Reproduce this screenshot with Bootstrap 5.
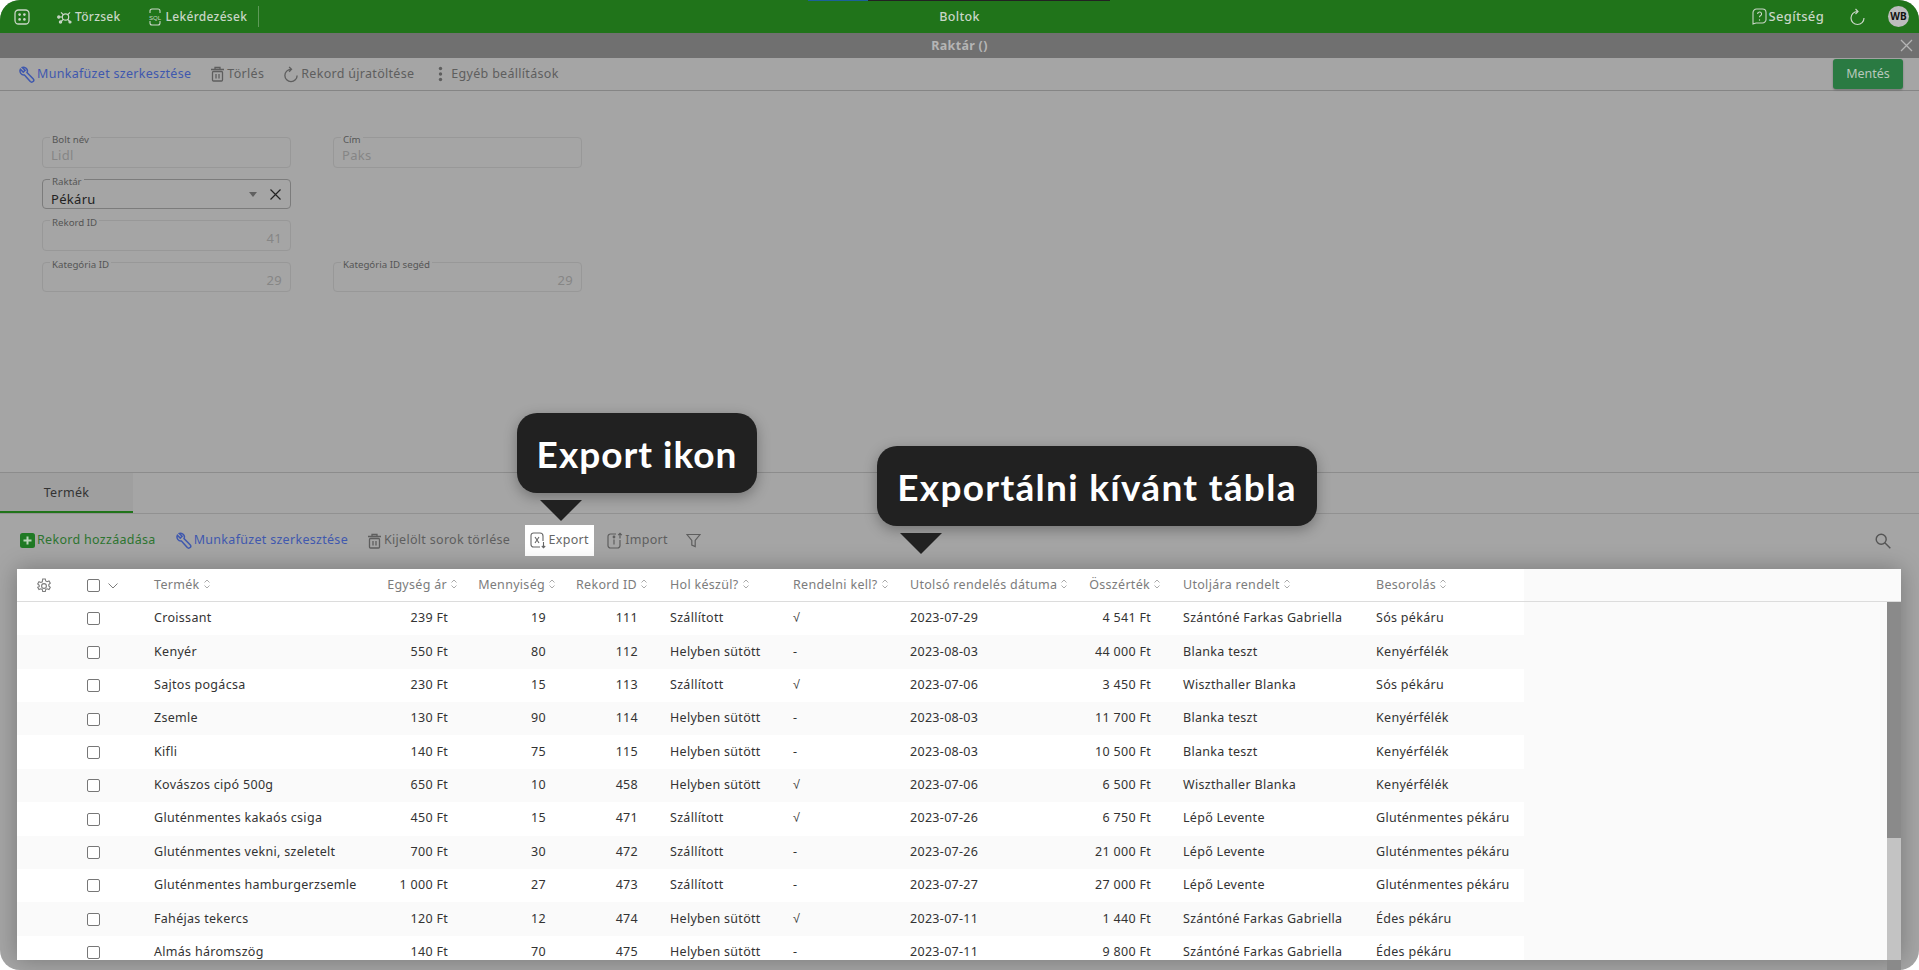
<!DOCTYPE html>
<html lang="hu">
<head>
<meta charset="utf-8">
<title>Boltok</title>
<link rel="stylesheet" href="https://cdn.jsdelivr.net/npm/bootstrap@5.3.0/dist/css/bootstrap.min.css">
<style>
html,body{height:970px;overflow:hidden;background:#fff}
body{font-family:"Noto Sans","Liberation Sans",sans-serif;font-size:12.5px;letter-spacing:.3px;color:#333}
.frame{position:relative;height:970px;background:#a5a5a5;border-radius:20px;overflow:hidden}
.topbar{position:relative;height:33px;background:#20741a;color:#c9d6c7;font-weight:500;font-size:12px;padding-left:14px}
.topline{position:absolute;left:808px;top:0;width:302px;height:1px;background:#222}
.topline::before{content:"";position:absolute;left:0;top:0;width:60px;height:1px;background:#1c6199}
.toptitle{position:absolute;left:0;right:0;top:0;line-height:33px;text-align:center;font-size:12.5px}
.top-item{display:flex;align-items:center;gap:2px;margin-left:27px}
.top-item-sql{gap:4px}
.top-divider{width:1px;height:21px;background:#5e9a58;margin-left:11px}
.top-help{display:flex;align-items:center;gap:2px;margin-left:auto;font-size:13px}
.top-reload{margin-left:25px}
.avatar-wb{width:21px;height:21px;margin-left:22px;margin-right:10px;background:#bdbdbd;color:#111;font-size:10px;font-weight:700;letter-spacing:0}
.titlebar{position:relative;height:25px;background:#707070;color:#b5b5b5;font-weight:700;text-align:center;line-height:25px;font-size:12.5px}
.titleclose{position:absolute;right:6px;top:6px;width:13px;height:13px;display:block}
.toolbar{height:33px;border-bottom:1px solid #858585;padding:0 16px 0 19px}
.tool{display:flex;align-items:center;gap:2px;color:#5e5e5e}
.tool svg{flex:none}
.tool-blue{color:#3f58ae}
.tool-green{color:#2d7430}
.ml-trash{margin-left:19px}
.ml-reload{margin-left:19px}
.ml-more{margin-left:24px;gap:8px}
.ml-import{margin-left:13px}
.ml-filter{margin-left:18px}
.save-btn{background:#2a7a42;color:#b8c8bc;border-radius:3px;font-size:12.5px;width:70px;height:30px;box-shadow:0 1px 2px rgba(0,0,0,.3);padding:1px 0 0}
.form-zone{height:381px;padding:46px 0 0 42px}
.fs-row{display:flex;gap:42px;margin-bottom:11px}
.fs{position:relative;width:249px;height:30.5px;border:1px solid #989898;border-radius:4px;padding:8px 8px 0;font-size:13px;color:#868686;line-height:18px}
.fs-tall{border-color:#7c7c7c;color:#222;padding-top:10px}
.fs-num{text-align:right}
.fs-label{position:absolute;left:7px;top:-4px;padding:0 2px;background:#a5a5a5;font-size:9.7px;letter-spacing:0;line-height:12px;color:#555}
.fs-caret{position:absolute;right:33px;top:12px;width:0;height:0;border:4px solid transparent;border-top:5px solid #606060;border-bottom:0}
.fs-x{position:absolute;right:9px;top:9px}
.tabs{height:42px;border-top:1px solid #8c8c8c;border-bottom:1px solid #919191}
.tab-item{width:133px;height:40px;line-height:40px;text-align:center;background:#9f9f9f;border-bottom:2px solid #20741a;color:#333}
.subbar{height:55px;padding:0 28px 2px 20px}
.subbar .gap-a{margin-left:20px}
.export-hi{background:#fff;color:#666;height:31px;width:69px;justify-content:center;margin-left:15px}
.panel{position:relative;margin-left:17px;width:1884px;height:391px;background:#fafafa;box-shadow:0 0 22px rgba(0,0,0,.28);overflow:hidden}
.gridtable{table-layout:fixed;width:1507px;border-collapse:collapse;margin:0}
.gridtable th{height:33px;font-weight:400;color:#7c7c7c;background:#fff;padding:0 14px;white-space:nowrap}
.gridtable td{height:33.36px;padding:0 14px;white-space:nowrap;color:#333;background:#fff}
.gridtable tbody tr:nth-child(even) td{background:#fafafa}
.gridtable td.num{text-align:right;padding-right:18px}
.gridtable th.num{text-align:right;padding-right:8px;padding-left:0}
.headrule{position:absolute;left:0;right:0;top:32px;height:1px;background:#dcdcdc}
.w-a{width:58px}.w-b{width:65px}.w-c{width:242px}.w-d{width:84px}.w-e{width:98px}.w-f{width:92px}.w-g{width:123px}.w-h{width:117px}.w-i{width:179px}.w-j{width:94px}.w-k{width:193px}.w-l{width:162px}
.boxy{display:inline-block;width:13px;height:13px;border:1px solid #777;border-radius:2px;background:#fff;vertical-align:middle}
.gridtable .center-cell{padding:0 0 0 12px}
.gear{margin-left:7px}
.sorter{display:inline-block;width:8px;height:12px;vertical-align:-1px;margin-left:3px}
.mark-ok{color:#555}
.sbar{position:absolute;right:0;top:33px;bottom:0;width:14px;background:#c3c3c3}
.sthumb{height:236px;background:#8a8a8a}
.stub{position:absolute;right:18px;bottom:0;width:14px;height:10px;background:#8a8a8a}
.callout{position:absolute;background:#212121;color:#fff;border-radius:20px;height:80px;line-height:82px;text-align:center;font-family:Lato,"Liberation Sans",sans-serif;font-weight:700;font-size:37px;letter-spacing:1px;box-shadow:0 4px 14px rgba(0,0,0,.3)}
.callout-a{left:517px;top:413px;width:240px}
.callout-b{left:877px;top:446px;width:440px;letter-spacing:1.3px}
.pointer{position:absolute;width:0;height:0;border-style:solid;border-color:#212121 transparent transparent;border-width:21px 21px 0}
.pointer-a{left:540px;top:500px}
.pointer-b{left:900px;top:533px}
</style>
</head>
<body>
<svg width="0" height="0" class="position-absolute">
  <defs>
    <symbol id="sort-ic" viewBox="0 0 8 12"><path d="M1.500 4.500 4 2l2.500 2.500M1.500 7.500 4 10l2.500-2.500" fill="none" stroke="#aaa"/></symbol>
    <symbol id="wrench-ic" viewBox="0 0 17 17"><path d="M1.500 3 4.500 6 6.500 4 3.500 1A4 4 0 0 1 8.500 6.500L15 13A2 2 0 0 1 12 16L5.800 9A4.200 4.200 0 0 1 1.500 3Z" fill="none" stroke="#3f58ae" stroke-width="1.600"/></symbol>
    <symbol id="trash-ic" viewBox="0 0 15 16"><path d="M1 3.500h13M5 3.500V1.500h5v2" fill="none" stroke="#5e5e5e" stroke-width="1.300"/><rect x="2.500" y="5.500" width="10" height="9.500" rx="1" fill="none" stroke="#5e5e5e" stroke-width="1.300"/><path d="M6 8v4.500M9 8v4.500" fill="none" stroke="#5e5e5e" stroke-width="1.300"/></symbol>
  </defs>
</svg>
<div class="frame">
  <div class="topbar d-flex align-items-center">
    <span class="topline"></span>
    <span class="toptitle">Boltok</span>
    <svg class="flex-shrink-0" width="16" height="16" viewBox="0 0 16 16" fill="none" stroke="#c9d6c7" stroke-width="1.300"><rect x="1" y="1" width="14" height="14" rx="3.500"/><g fill="#c9d6c7" stroke="none"><circle cx="5.600" cy="5.600" r="1.300"/><circle cx="10.400" cy="5.600" r="1.300"/><circle cx="5.600" cy="10.400" r="1.300"/><circle cx="10.400" cy="10.400" r="1.300"/></g></svg>
    <span class="top-item">
      <svg width="16" height="16" viewBox="0 0 16 16" fill="none" stroke="#c9d6c7" stroke-width="1.200"><circle cx="8.500" cy="8" r="3.200"/><path d="M6.200 5.700 4 3.400M10.800 5.700l2.300-2.300M6.200 10.300l-2 2.200M10.800 10.300l1.800 2.200M5.300 8H2.500"/><circle cx="1.800" cy="8" r="1.100" fill="#c9d6c7"/><circle cx="3.500" cy="13" r="1.100" fill="#c9d6c7"/><circle cx="13" cy="13" r="1" fill="#c9d6c7"/></svg>
      <span>Törzsek</span>
    </span>
    <span class="top-item top-item-sql">
      <svg width="14" height="18" viewBox="0 0 14 18" fill="none" stroke="#c9d6c7" stroke-width="1.100"><path d="M2 5V3a2 2 0 0 1 2-2h6a2 2 0 0 1 2 2v2M2 13v2a2 2 0 0 0 2 2h6a2 2 0 0 0 2-2v-2"/><text x="7" y="11.500" font-size="6" fill="#c9d6c7" stroke="none" text-anchor="middle" font-family="Liberation Sans" letter-spacing="0">SQL</text></svg>
      <span>Lekérdezések</span>
    </span>
    <span class="top-divider"></span>
    <span class="top-help">
      <svg width="15" height="17" viewBox="0 0 15 17" fill="none" stroke="#c9d6c7" stroke-width="1.100"><path d="M4.500 1h6a3.500 3.500 0 0 1 3.500 3.500v7A3.500 3.500 0 0 1 10.500 15H4L1 16V4.500A3.500 3.500 0 0 1 4.500 1z"/><path d="M5.600 6a2 2 0 1 1 2.800 1.800c-.6.3-.9.7-.9 1.500"/><circle cx="7.500" cy="12" r=".7" fill="#c9d6c7" stroke="none"/></svg>
      Segítség
    </span>
    <svg class="top-reload" width="17" height="18" viewBox="0 0 17 18" fill="none" stroke="#c9d6c7" stroke-width="1.200"><path d="M8.500 3.500A6.500 6.500 0 1 0 15 10"/><path d="M6.500 1 9 3.500 6.500 6"/></svg>
    <span class="avatar-wb d-flex align-items-center justify-content-center rounded-circle">WB</span>
  </div>

  <div class="titlebar">Raktár ()
    <svg class="titleclose" viewBox="0 0 13 13" stroke="#b5b5b5" stroke-width="1.300"><path d="M1 1l11 11M12 1 1 12"/></svg>
  </div>

  <div class="toolbar d-flex align-items-center">
    <span class="tool tool-blue"><svg width="16" height="17"><use href="#wrench-ic"/></svg>Munkafüzet szerkesztése</span>
    <span class="tool ml-trash"><svg width="15" height="16"><use href="#trash-ic"/></svg>Törlés</span>
    <span class="tool ml-reload">
      <svg width="16" height="17" viewBox="0 0 17 18" fill="none" stroke="#5e5e5e" stroke-width="1.400"><path d="M8.500 3.500A6.500 6.500 0 1 0 15 10"/><path d="M6.500 1 9 3.500 6.500 6"/></svg>
      Rekord újratöltése</span>
    <span class="tool ml-more">
      <svg width="5" height="16" viewBox="0 0 5 16" fill="#5e5e5e"><circle cx="2.500" cy="2.500" r="1.700"/><circle cx="2.500" cy="8" r="1.700"/><circle cx="2.500" cy="13.500" r="1.700"/></svg>
      Egyéb beállítások</span>
    <button type="button" class="btn save-btn ms-auto">Mentés</button>
  </div>

  <div class="form-zone">
    <div class="fs-row">
      <div class="fs"><span class="fs-label">Bolt név</span>Lidl</div>
      <div class="fs"><span class="fs-label">Cím</span>Paks</div>
    </div>
    <div class="fs-row">
      <div class="fs fs-tall"><span class="fs-label">Raktár</span>Pékáru<span class="fs-caret"></span>
        <svg class="fs-x" width="11" height="11" viewBox="0 0 11 11" stroke="#222" stroke-width="1.200"><path d="M.5.5l10 10M10.500.5l-10 10"/></svg></div>
    </div>
    <div class="fs-row">
      <div class="fs fs-num"><span class="fs-label">Rekord ID</span>41</div>
    </div>
    <div class="fs-row">
      <div class="fs fs-num"><span class="fs-label">Kategória ID</span>29</div>
      <div class="fs fs-num"><span class="fs-label">Kategória ID segéd</span>29</div>
    </div>
  </div>

  <div class="tabs"><div class="tab-item">Termék</div></div>

  <div class="subbar d-flex align-items-center">
    <span class="tool tool-green">
      <svg width="15" height="15" viewBox="0 0 15 15"><rect width="15" height="15" rx="2.500" fill="#1f7a24"/><path d="M7.500 3.500v8M3.500 7.500h8" stroke="#b8d4b8" stroke-width="2"/></svg>
      Rekord hozzáadása</span>
    <span class="tool tool-blue gap-a"><svg width="16" height="17"><use href="#wrench-ic"/></svg>Munkafüzet szerkesztése</span>
    <span class="tool ml-trash"><svg width="15" height="16"><use href="#trash-ic"/></svg>Kijelölt sorok törlése</span>
    <span class="tool export-hi">
      <svg width="16" height="17" viewBox="0 0 16 17" fill="none" stroke="#666" stroke-width="1.100"><path d="M13 9V4a3 3 0 0 0-3-3H3.500A2.500 2.500 0 0 0 1 3.500v9A2.500 2.500 0 0 0 3.500 15H10"/><path d="m5 5 4 6M9 5l-4 6"/><path d="M13.500 10v5.500M11.800 14l1.700 1.700 1.700-1.700"/></svg>
      Export</span>
    <span class="tool ml-import">
      <svg width="16" height="17" viewBox="0 0 16 17" fill="none" stroke="#5e5e5e" stroke-width="1.200"><path d="M13 8v5.500a2.500 2.500 0 0 1-2.500 2.500h-7A2.500 2.500 0 0 1 1 13.500v-9A2.500 2.500 0 0 1 3.500 2H9"/><path d="M7 7.500v5"/><circle cx="7" cy="5" r=".8" fill="#5e5e5e"/><path d="M13 6.500V1.500M11.200 3.200 13 1.300l1.800 1.900"/></svg>
      Import</span>
    <span class="tool ml-filter">
      <svg width="15" height="15" viewBox="0 0 15 15" fill="none" stroke="#5e5e5e" stroke-width="1.200"><path d="M1 1.500h13L9.200 7.500v6l-3.400-1.500V7.500z"/></svg>
    </span>
    <svg class="ms-auto" width="16" height="16" viewBox="0 0 16 16" fill="none" stroke="#555" stroke-width="1.400"><circle cx="6.200" cy="6.200" r="5"/><path d="m9.800 9.800 5.500 5.500"/></svg>
  </div>

  <div class="panel">
    <table class="gridtable">
      <colgroup><col class="w-a"><col class="w-b"><col class="w-c"><col class="w-d"><col class="w-e"><col class="w-f"><col class="w-g"><col class="w-h"><col class="w-i"><col class="w-j"><col class="w-k"><col class="w-l"></colgroup>
      <thead>
        <tr>
          <th class="center-cell"><svg class="gear" width="16" height="16" viewBox="0 0 16 16" fill="none" stroke="#7c7c7c" stroke-width="1.100"><circle cx="8" cy="8" r="2.400"/><path d="M6.700 1h2.600l.4 2 1.400.7 1.900-.8 1.300 2.300-1.500 1.300v1.500l1.500 1.300-1.300 2.300-1.900-.8-1.400.7-.4 2H6.700l-.4-2-1.400-.7-1.900.8-1.300-2.300L3.200 8.700V7.300L1.700 6l1.300-2.300 1.900.8 1.400-.7z"/></svg></th>
          <th class="center-cell"><span class="boxy"></span><svg class="ms-2" width="10" height="6" viewBox="0 0 10 6" fill="none" stroke="#7c7c7c"><path d="m.5.5 4.500 4.500L9.500.5"/></svg></th>
          <th>Termék<svg class="sorter"><use href="#sort-ic"/></svg></th>
          <th class="num">Egység ár<svg class="sorter"><use href="#sort-ic"/></svg></th>
          <th class="num">Mennyiség<svg class="sorter"><use href="#sort-ic"/></svg></th>
          <th class="num">Rekord ID<svg class="sorter"><use href="#sort-ic"/></svg></th>
          <th>Hol készül?<svg class="sorter"><use href="#sort-ic"/></svg></th>
          <th>Rendelni kell?<svg class="sorter"><use href="#sort-ic"/></svg></th>
          <th>Utolsó rendelés dátuma<svg class="sorter"><use href="#sort-ic"/></svg></th>
          <th class="num">Összérték<svg class="sorter"><use href="#sort-ic"/></svg></th>
          <th>Utoljára rendelt<svg class="sorter"><use href="#sort-ic"/></svg></th>
          <th>Besorolás<svg class="sorter"><use href="#sort-ic"/></svg></th>
        </tr>
      </thead>
      <tbody>
        <tr><td></td><td class="center-cell"><span class="boxy"></span></td><td>Croissant</td><td class="num">239 Ft</td><td class="num">19</td><td class="num">111</td><td>Szállított</td><td class="mark-ok">√</td><td>2023-07-29</td><td class="num">4 541 Ft</td><td>Szántóné Farkas Gabriella</td><td>Sós pékáru</td></tr>
        <tr><td></td><td class="center-cell"><span class="boxy"></span></td><td>Kenyér</td><td class="num">550 Ft</td><td class="num">80</td><td class="num">112</td><td>Helyben sütött</td><td>-</td><td>2023-08-03</td><td class="num">44 000 Ft</td><td>Blanka teszt</td><td>Kenyérfélék</td></tr>
        <tr><td></td><td class="center-cell"><span class="boxy"></span></td><td>Sajtos pogácsa</td><td class="num">230 Ft</td><td class="num">15</td><td class="num">113</td><td>Szállított</td><td class="mark-ok">√</td><td>2023-07-06</td><td class="num">3 450 Ft</td><td>Wiszthaller Blanka</td><td>Sós pékáru</td></tr>
        <tr><td></td><td class="center-cell"><span class="boxy"></span></td><td>Zsemle</td><td class="num">130 Ft</td><td class="num">90</td><td class="num">114</td><td>Helyben sütött</td><td>-</td><td>2023-08-03</td><td class="num">11 700 Ft</td><td>Blanka teszt</td><td>Kenyérfélék</td></tr>
        <tr><td></td><td class="center-cell"><span class="boxy"></span></td><td>Kifli</td><td class="num">140 Ft</td><td class="num">75</td><td class="num">115</td><td>Helyben sütött</td><td>-</td><td>2023-08-03</td><td class="num">10 500 Ft</td><td>Blanka teszt</td><td>Kenyérfélék</td></tr>
        <tr><td></td><td class="center-cell"><span class="boxy"></span></td><td>Kovászos cipó 500g</td><td class="num">650 Ft</td><td class="num">10</td><td class="num">458</td><td>Helyben sütött</td><td class="mark-ok">√</td><td>2023-07-06</td><td class="num">6 500 Ft</td><td>Wiszthaller Blanka</td><td>Kenyérfélék</td></tr>
        <tr><td></td><td class="center-cell"><span class="boxy"></span></td><td>Gluténmentes kakaós csiga</td><td class="num">450 Ft</td><td class="num">15</td><td class="num">471</td><td>Szállított</td><td class="mark-ok">√</td><td>2023-07-26</td><td class="num">6 750 Ft</td><td>Lépő Levente</td><td>Gluténmentes pékáru</td></tr>
        <tr><td></td><td class="center-cell"><span class="boxy"></span></td><td>Gluténmentes vekni, szeletelt</td><td class="num">700 Ft</td><td class="num">30</td><td class="num">472</td><td>Szállított</td><td>-</td><td>2023-07-26</td><td class="num">21 000 Ft</td><td>Lépő Levente</td><td>Gluténmentes pékáru</td></tr>
        <tr><td></td><td class="center-cell"><span class="boxy"></span></td><td>Gluténmentes hamburgerzsemle</td><td class="num">1 000 Ft</td><td class="num">27</td><td class="num">473</td><td>Szállított</td><td>-</td><td>2023-07-27</td><td class="num">27 000 Ft</td><td>Lépő Levente</td><td>Gluténmentes pékáru</td></tr>
        <tr><td></td><td class="center-cell"><span class="boxy"></span></td><td>Fahéjas tekercs</td><td class="num">120 Ft</td><td class="num">12</td><td class="num">474</td><td>Helyben sütött</td><td class="mark-ok">√</td><td>2023-07-11</td><td class="num">1 440 Ft</td><td>Szántóné Farkas Gabriella</td><td>Édes pékáru</td></tr>
        <tr><td></td><td class="center-cell"><span class="boxy"></span></td><td>Almás háromszög</td><td class="num">140 Ft</td><td class="num">70</td><td class="num">475</td><td>Helyben sütött</td><td>-</td><td>2023-07-11</td><td class="num">9 800 Ft</td><td>Szántóné Farkas Gabriella</td><td>Édes pékáru</td></tr>
      </tbody>
    </table>
    <div class="headrule"></div>
    <div class="sbar"><div class="sthumb"></div></div>
  </div>
  <div class="stub"></div>

  <div class="callout callout-a">Export ikon</div>
  <div class="pointer pointer-a"></div>
  <div class="callout callout-b">Exportálni kívánt tábla</div>
  <div class="pointer pointer-b"></div>
</div>
<script src="https://cdn.jsdelivr.net/npm/bootstrap@5.3.0/dist/js/bootstrap.bundle.min.js"></script>
</body>
</html>
